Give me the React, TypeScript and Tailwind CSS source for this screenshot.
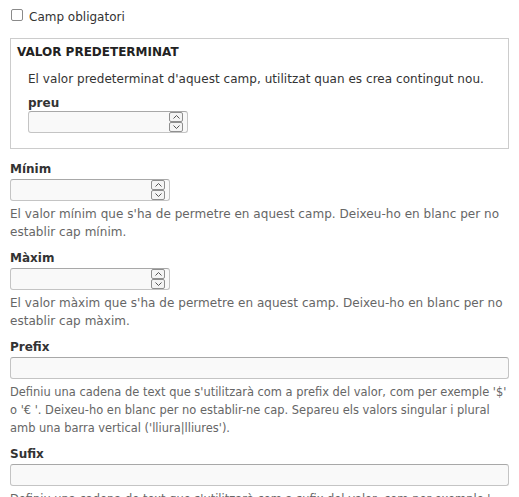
import React from 'react';

const NumberInput: React.FC = () => (
  <div className="relative h-[22px] w-[160px] rounded-[3px] border border-[#c4c4c4] border-t-[#a8a8a8] bg-[#f9f9f9]">
    <div className="absolute right-[4px] top-0 flex h-full w-[14px] flex-col">
      <div className="flex h-1/2 items-center justify-center rounded-[2px] border border-[#8f8f8f] bg-[#f4f4f4]">
        <svg width="7" height="4" viewBox="0 0 7 4">
          <path d="M0.5 3.5 L3.5 0.5 L6.5 3.5" fill="none" stroke="#555" strokeWidth="1" />
        </svg>
      </div>
      <div className="flex h-1/2 items-center justify-center rounded-[2px] border border-[#8f8f8f] bg-[#f4f4f4]">
        <svg width="7" height="4" viewBox="0 0 7 4">
          <path d="M0.5 0.5 L3.5 3.5 L6.5 0.5" fill="none" stroke="#555" strokeWidth="1" />
        </svg>
      </div>
    </div>
  </div>
);

const TextInput: React.FC = () => (
  <div className="h-[22px] w-full rounded-[3px] border border-[#c4c4c4] border-t-[#a8a8a8] bg-[#f9f9f9]" />
);

interface ItemProps {
  label: string;
  description: React.ReactNode;
  number?: boolean;
  small?: boolean;
  className?: string;
}

const FormItem: React.FC<ItemProps> = ({ label, description, number, small, className }) => (
  <div className={className}>
    <div className="text-[12px] font-bold leading-[18px] text-[#333]">{label}</div>
    <div className="mt-px">{number ? <NumberInput /> : <TextInput />}</div>
    <div
      className={
        small
          ? 'mt-[4px] text-[11.45px] leading-[18px] text-[#666]'
          : 'mt-[4px] text-[12px] leading-[18px] tracking-[0.04px] text-[#666]'
      }
    >
      {description}
    </div>
  </div>
);

export default function App() {
  return (
    <div className="h-[497px] overflow-hidden bg-white px-[10px] font-['DejaVu_Sans',sans-serif]">
      <div className="flex items-start pt-[8px]">
        <span className="ml-px mt-px h-[12px] w-[12px] rounded-[2px] border border-[#8a8a8a] bg-white" />
        <span className="ml-[6px] text-[12px] leading-[18px] text-[#333]">Camp obligatori</span>
      </div>

      <div className="mt-[12px] border border-[#ccc] px-[6px] pb-[15px] pt-[4px]">
        <div className="text-[12px] font-bold uppercase leading-[18px] text-[#222]">Valor predeterminat</div>
        <div className="pl-[11px]">
          <div className="mt-[9px] text-[12px] leading-[18px] tracking-[0.04px] text-[#333]">
            El valor predeterminat d'aquest camp, utilitzat quan es crea contingut nou.
          </div>
          <div className="mt-[6px] text-[12px] font-bold leading-[18px] text-[#333]">preu</div>
          <div className="-mt-px">
            <NumberInput />
          </div>
        </div>
      </div>

      <FormItem
        className="mt-[11px]"
        label="Mínim"
        number
        description="El valor mínim que s'ha de permetre en aquest camp. Deixeu-ho en blanc per no establir cap mínim."
      />
      <FormItem
        className="mt-[8px]"
        label="Màxim"
        number
        description="El valor màxim que s'ha de permetre en aquest camp. Deixeu-ho en blanc per no establir cap màxim."
      />
      <FormItem
        className="mt-[8px]"
        label="Prefix"
        small
        description={
          <>
            <span className="block whitespace-nowrap">
              Definiu una cadena de text que s'utilitzarà com a prefix del valor, com per exemple '$'
            </span>
            <span className="block whitespace-nowrap">
              o '€ '. Deixeu-ho en blanc per no establir-ne cap. Separeu els valors singular i plural
            </span>
            <span className="block whitespace-nowrap">amb una barra vertical ('lliura|lliures').</span>
          </>
        }
      />
      <FormItem
        className="mt-[8px]"
        label="Sufix"
        small
        description="Definiu una cadena de text que s'utilitzarà com a sufix del valor, com per exemple ' m²', ' m' o ' píxels'. Deixeu-ho en blanc per no establir-ne cap. Separeu els valors singular i plural amb una barra vertical ('píxel|píxels')."
      />
    </div>
  );
}
